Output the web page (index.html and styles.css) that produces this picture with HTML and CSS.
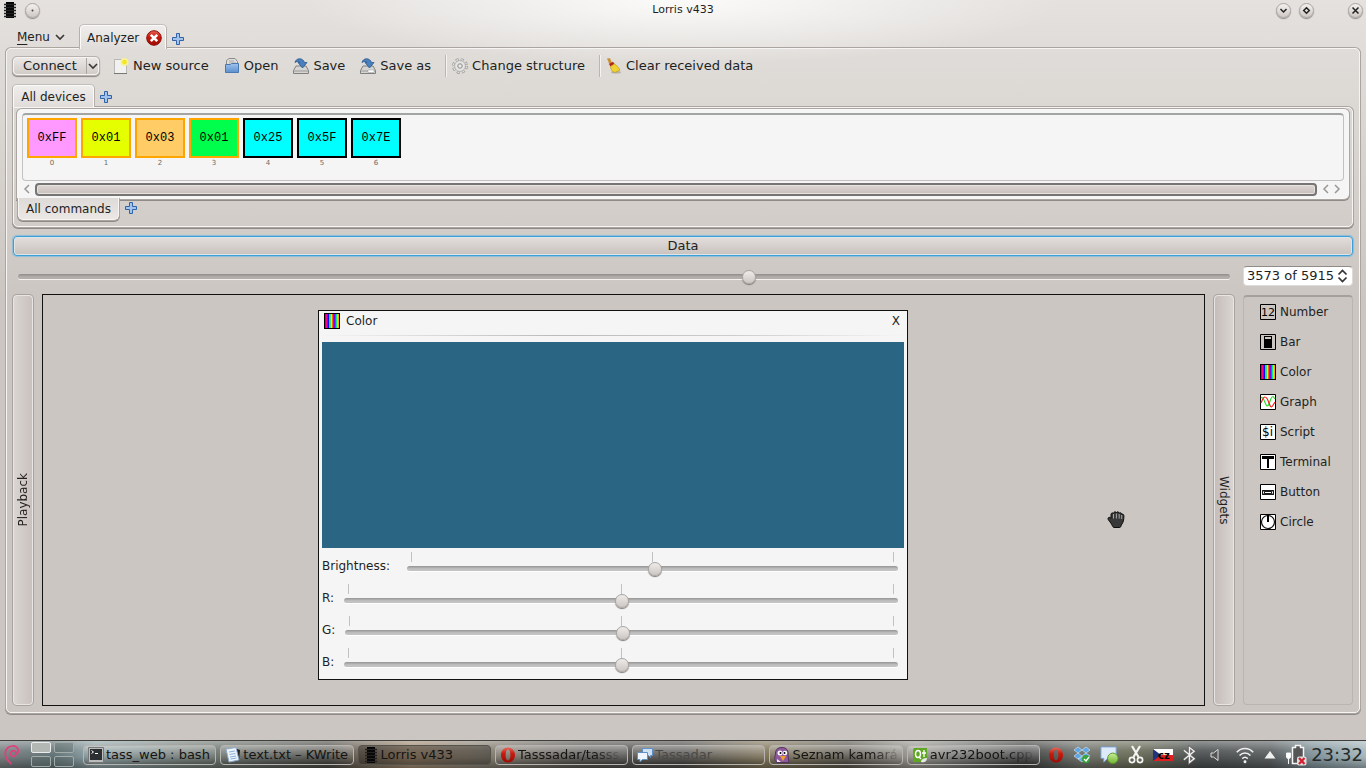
FILE: index.html
```html
<!DOCTYPE html>
<html lang="en">
<head>
<meta charset="utf-8">
<title>Lorris v433</title>
<link rel="stylesheet" href="styles.css">
</head>
<body>
<svg class="defs" aria-hidden="true">
  <defs>
    <linearGradient id="gRed" x1="0" y1="0" x2="0" y2="1"><stop offset="0" stop-color="#e8675a"/><stop offset=".4" stop-color="#c81c10"/><stop offset="1" stop-color="#9c0a04"/></linearGradient>
    <linearGradient id="gBlue" x1="0" y1="0" x2="0" y2="1"><stop offset="0" stop-color="#9fc3ec"/><stop offset="1" stop-color="#5b8fce"/></linearGradient>
    <linearGradient id="gGreen" x1="0" y1="0" x2="0" y2="1"><stop offset="0" stop-color="#c9ee9b"/><stop offset="1" stop-color="#6fb52c"/></linearGradient>
  </defs>
  <symbol id="plus" viewBox="0 0 12 12"><path d="M4.5.5h3v4h4v3h-4v4h-3v-4h-4v-3h4z" fill="#a3c4ea" stroke="#2f62a8"/></symbol>
  <symbol id="chip" viewBox="0 0 14 16"><path d="M3 0h8v16H3z"/><path d="M1 2.500h12M1 5.500h12M1 8.500h12M1 11.500h12M1 14.500h12" stroke="#222" stroke-width="1.500"/></symbol>
  <symbol id="chev" viewBox="0 0 10 8"><path d="M1 2l4 4 4-4" fill="none" stroke="#3a3836" stroke-width="1.600"/></symbol>
  <symbol id="colorbars" viewBox="0 0 16 16"><path d="M0 0h16v16H0z"/><path d="M1 1h1v14H1z" fill="#f00"/><path d="M2 1h1v14H2z" fill="#f08"/><path d="M3 1h1v14H3z" fill="#70f"/><path d="M4 1h1v14H4z" fill="#00f"/><path d="M5 1h1v14H5z" fill="#0df"/><path d="M6 1h1v14H6z" fill="#3e6"/><path d="M7 1h1v14H7z" fill="#df0"/><path d="M8 1h1v14H8z" fill="#f60"/><path d="M9 1h1v14H9z" fill="#f04"/><path d="M10 1h1v14h-1z" fill="#70f"/><path d="M11 1h1v14h-1z" fill="#07f"/><path d="M12 1h1v14h-1z" fill="#0e8"/><path d="M13 1h1v14h-1z" fill="#af0"/><path d="M14 1h1v14h-1z" fill="#fa0"/></symbol>
  <symbol id="drive" viewBox="0 0 16 16"><path d="M3 8h10l2.500 4.500v3H.5v-3z" fill="#d5d5d3" stroke="#80807e"/><path d="M1 13h14" stroke="#999"/><path d="M2 4.500C3-.5 10-.5 11.500 4.500H14L9.500 10 5 4.500h2C6.500 3 4 3 2 4.500z" fill="#4a80bd" stroke="#28578f" stroke-width=".8"/></symbol>
  <symbol id="opera" viewBox="0 0 16 16"><path fill-rule="evenodd" d="M8 0.500c4.200 0 7 3.200 7 7.500s-2.800 7.500-7 7.500S1 12.300 1 8 3.800.5 8 .5zM8 2.500C6.500 2.500 5.600 5 5.600 8s.9 5.500 2.400 5.500 2.400-2.500 2.400-5.500S9.500 2.500 8 2.500z" fill="url(#gRed)"/></symbol>
</svg>

<header class="titlebar">
  <div class="title-side">
    <svg width="14" height="16"><use href="#chip"/></svg>
    <button class="round" aria-label="Pin"><svg width="9" height="9" viewBox="0 0 9 9"><circle cx="4.500" cy="4.500" r="1" fill="#444"/></svg></button>
  </div>
  <h1>Lorris v433</h1>
  <div class="title-side title-end">
    <button class="round" aria-label="Minimize"><svg width="9" height="9" viewBox="0 0 9 9"><path d="M1.500 3l3 3 3-3" fill="none" stroke="#222" stroke-width="1.500"/></svg></button>
    <button class="round" aria-label="Maximize"><svg width="9" height="9" viewBox="0 0 9 9"><path d="M4.500 1.700l2.800 2.800-2.800 2.800-2.800-2.800z" fill="none" stroke="#222" stroke-width="1.500"/></svg></button>
    <button class="round close-window" aria-label="Close"><svg width="9" height="9" viewBox="0 0 9 9"><path d="M1.500 1.500l6 6M7.500 1.500l-6 6" stroke="#222" stroke-width="1.500"/></svg></button>
  </div>
</header>

<nav class="main-tabs">
  <button class="menu"><span><u>M</u>enu</span><svg width="10" height="8"><use href="#chev"/></svg></button>
  <div class="tab tab-main">
    <button class="plain">Analyzer</button>
    <button class="plain" aria-label="Close tab"><svg width="16" height="16" viewBox="0 0 16 16"><circle cx="8" cy="8" r="7.300" fill="url(#gRed)" stroke="#8e1008"/><path d="M4.800 4.800l6.400 6.400M11.200 4.800l-6.400 6.400" stroke="#fff" stroke-width="2.600"/></svg></button>
  </div>
  <button class="plain add" aria-label="New tab"><svg width="12" height="12"><use href="#plus"/></svg></button>
</nav>

<main class="frame">
  <div class="toolbar">
    <div class="split"><button class="plain connect">Connect</button><button class="plain drop" aria-label="Connect options"><svg width="10" height="8"><use href="#chev"/></svg></button></div>
    <button class="plain tool new"><svg width="16" height="16" viewBox="0 0 16 16"><path d="M1.500 1.500h12v14h-12z" fill="#f1f1ef" stroke="#b9b7b4"/><path d="M1 15.500h13" stroke="#777"/><circle cx="11.500" cy="4" r="4" fill="#f7f29a"/><circle cx="11.500" cy="4" r="2.300" fill="#f5e71b"/></svg>New source</button>
    <button class="plain tool"><svg width="16" height="16" viewBox="0 0 16 16"><path d="M2.500 8V2.500L5 .5h6l2.500 3V8z" fill="#dededc" stroke="#8a8a88"/><path d="M5 3h5M5 5h7" stroke="#aaa"/><path d="M1.500 6.500h5l1-1h7v9h-13z" fill="url(#gBlue)" stroke="#4a78b0"/></svg>Open</button>
    <button class="plain tool"><svg width="16" height="16"><use href="#drive"/></svg>Save</button>
    <button class="plain tool"><svg width="16" height="16" viewBox="0 0 16 16"><use href="#drive"/><path d="M8 12h6v2.500H8z" fill="#fff" stroke="#999" stroke-width=".5"/></svg>Save as</button>
    <span class="sep"></span>
    <button class="plain tool"><svg width="16" height="16" viewBox="0 0 16 16"><circle cx="8" cy="8" r="6.500" fill="none" stroke="#9b9997" stroke-width="2.800" stroke-dasharray="2.900 2.205"/><circle cx="8" cy="8" r="6.500" fill="none" stroke="#e6e5e3" stroke-width="1.400" stroke-dasharray="1.900 3.205" stroke-dashoffset="-.5"/><circle cx="8" cy="8" r="5.400" fill="#e6e5e3" stroke="#a9a7a5" stroke-width=".7"/><circle cx="8" cy="8" r="2.300" fill="#d2d1cf" stroke="#999"/><circle cx="8" cy="8" r="1" fill="#f4f4f4"/></svg>Change structure</button>
    <span class="sep"></span>
    <button class="plain tool"><svg width="16" height="16" viewBox="0 0 16 16"><ellipse cx="10" cy="14.300" rx="5" ry="1.300" fill="#8a8683" opacity=".5"/><path d="M1 .5l3-.2L6 5 3.500 6.500z" fill="#c79134"/><path d="M3 6l4-2.300L8.500 6 4.500 8.500z" fill="#b3261c"/><path d="M4.500 8.500L8.500 6c2.500 1.500 4 3.500 5.500 6l-5 2.500c-3-.5-4-3-4.500-6z" fill="#f0d232" stroke="#c29a12" stroke-width=".7"/></svg>Clear received data</button>
  </div>

  <section class="devices">
    <nav class="device-tabs">
      <button class="tab tab-device">All devices</button>
      <button class="plain add" aria-label="Add device"><svg width="12" height="12"><use href="#plus"/></svg></button>
    </nav>
    <div class="device-frame">
      <div class="packet-frame">
        <div class="packet">
          <div class="byte"><b class="pink">0xFF</b><small>0</small></div>
          <div class="byte"><b class="yellow">0x01</b><small>1</small></div>
          <div class="byte"><b class="orange">0x03</b><small>2</small></div>
          <div class="byte"><b class="green">0x01</b><small>3</small></div>
          <div class="byte"><b class="cyan">0x25</b><small>4</small></div>
          <div class="byte"><b class="cyan">0x5F</b><small>5</small></div>
          <div class="byte"><b class="cyan">0x7E</b><small>6</small></div>
        </div>
        <div class="scroll">
          <button class="plain" aria-label="Scroll left"><svg width="7" height="10" viewBox="0 0 7 10"><path d="M6 1L2 5l4 4" fill="none" stroke="#9a9896" stroke-width="1.500"/></svg></button>
          <div class="scroll-thumb"></div>
          <button class="plain" aria-label="Scroll left"><svg width="7" height="10" viewBox="0 0 7 10"><path d="M6 1L2 5l4 4" fill="none" stroke="#9a9896" stroke-width="1.500"/></svg></button>
          <button class="plain" aria-label="Scroll right"><svg width="7" height="10" viewBox="0 0 7 10"><path d="M1 1l4 4-4 4" fill="none" stroke="#9a9896" stroke-width="1.500"/></svg></button>
        </div>
      </div>
      <nav class="command-tabs">
        <button class="tab-bottom">All commands</button>
        <button class="plain add" aria-label="Add command"><svg width="12" height="12"><use href="#plus"/></svg></button>
      </nav>
    </div>
  </section>

  <button class="data">Data</button>

  <div class="position">
    <input class="range" type="range" min="0" max="5915" value="3573" aria-label="Packet position">
    <div class="spin">
      <input type="text" value="3573 of 5915" aria-label="Packet number">
      <button class="plain" aria-label="Step"><svg width="11" height="14" viewBox="0 0 11 14"><path d="M1.500 5.500l4-4 4 4M1.500 8.500l4 4 4-4" fill="none" stroke="#333" stroke-width="1.700"/></svg></button>
    </div>
  </div>

  <div class="workspace">
    <button class="side side-left"><span>Playback</span></button>
    <section class="canvas">
      <article class="widget">
        <header><svg width="16" height="16"><use href="#colorbars"/></svg><h2>Color</h2><button class="plain" aria-label="Close widget">X</button></header>
        <div class="swatch"></div>
        <div class="row"><label for="br">Brightness:</label><div class="scale scale-brightness"><div class="ticks"><i></i><i></i><i></i></div><input class="range" id="br" type="range" min="0" max="255" value="129"></div></div>
        <div class="row"><label for="r">R:</label><div class="scale"><div class="ticks"><i></i><i></i><i></i></div><input class="range" id="r" type="range" min="0" max="255" value="128"></div></div>
        <div class="row"><label for="g">G:</label><div class="scale"><div class="ticks"><i></i><i></i><i></i></div><input class="range" id="g" type="range" min="0" max="255" value="128"></div></div>
        <div class="row"><label for="b">B:</label><div class="scale"><div class="ticks"><i></i><i></i><i></i></div><input class="range" id="b" type="range" min="0" max="255" value="128"></div></div>
      </article>
      <svg class="hand" width="18" height="19" viewBox="0 0 18 19"><path d="M4.500 14L1.200 9.500C.5 8 1.800 6.800 3.200 7.600l.8.700V4.500C4 2.700 6 2.500 6.500 3.500 6.700 1.500 9 1.300 9.400 2.800c.5-1.500 2.600-1.200 2.800.5.600-1 2.400-.7 2.500 1 1-.6 2.200.1 2.200 1.500 0 4-.5 6.700-2.600 9.200-.5 1.500-.8 2.500-1.500 2.500H7c-1 0-1.500-1.500-2.500-3.500z" fill="#383838" stroke="#0c0c0c"/><path d="M6.500 4v4.500M9.400 3.500v5M12.200 4v4.500M14.700 5v4" stroke="#c4c4c4" stroke-width=".8"/></svg>
    </section>
    <button class="side side-right"><span>Widgets</span></button>
    <ul class="palette">
      <li><svg width="16" height="16" viewBox="0 0 16 16"><path d="M.5.5h15v15H.5z" fill="none" stroke="#000"/><text x="1" y="12" class="icon-num">12</text></svg>Number</li>
      <li><svg width="16" height="16" viewBox="0 0 16 16"><path d="M.5.5h15v15H.5z" fill="none" stroke="#000"/><path d="M4 2h8v12H4z"/><path d="M5 3h6v2H5z" fill="#ccc6c2"/></svg>Bar</li>
      <li><svg width="16" height="16"><use href="#colorbars"/></svg>Color</li>
      <li><svg width="16" height="16" viewBox="0 0 16 16"><path d="M.5.5h15v15H.5z" fill="#fff" stroke="#000"/><path d="M1 3.500C3 3 4 6 5 8.500S7.500 14 9 10s2-7.500 4-7.500L15 5" fill="none" stroke="#2ce02c" stroke-width="1.200"/><path d="M1 9c1.500-3 2-6 4-6s3 3 4 6 2 5 3.500 3L15 8" fill="none" stroke="#f02020" stroke-width="1.200"/></svg>Graph</li>
      <li><svg width="16" height="16" viewBox="0 0 16 16"><path d="M.5.5h15v15H.5z" fill="#fff" stroke="#000"/><text x="2" y="12" class="icon-script">$i</text></svg>Script</li>
      <li><svg width="16" height="16" viewBox="0 0 16 16"><path d="M.5.5h15v15H.5z" fill="#fff" stroke="#000"/><path d="M2 2h12v3H9v9H7V5H2z"/></svg>Terminal</li>
      <li><svg width="16" height="16" viewBox="0 0 16 16"><path d="M.5.5h15v15H.5z" fill="#fff" stroke="#000"/><path d="M2.500 6.500h11v4h-11zM4.500 7.500h7v2h-7zM2.500 6.500l2 1M13.500 6.500l-2 1M2.500 10.500l2-1M13.500 10.500l-2-1" fill="none" stroke="#000" stroke-width=".9"/></svg>Button</li>
      <li><svg width="16" height="16" viewBox="0 0 16 16"><path d="M.5.5h15v15H.5z" fill="#fff" stroke="#000"/><circle cx="8" cy="8" r="6.500" fill="none" stroke="#111" stroke-width="1.200"/><path d="M7 1h2v7H7z"/></svg>Circle</li>
    </ul>
  </div>
</main>

<footer class="taskbar">
  <button class="plain debian" aria-label="Start"><svg width="18" height="21" viewBox="0 0 18 21"><path d="M12 11.500c-3 2.500-6-1-3.500-4 2.500-2 5 0 4.500 3M13.500 11c4-5 .5-9.500-4.500-9C4 2.500 1.500 7 2.500 11.500c.8 4 3.500 6.500 6 8.500" fill="none" stroke="#e0407c" stroke-width="1.700"/></svg></button>
  <div class="pager"><i class="on"></i><i></i><i></i><i></i></div>
  <div class="tasks">
    <button class="task"><svg width="16" height="16" viewBox="0 0 16 16"><path d="M.5.5h15v15H.5z" fill="#bbb" stroke="#777"/><path d="M2 2h12v11H2z" fill="#2c2f31"/><path d="M3.500 3.500l2 1.500-2 1.500M7 6.500h3" fill="none" stroke="#fff"/></svg><span>tass_web : bash</span></button>
    <button class="task"><svg width="16" height="16" viewBox="0 0 16 16"><path d="M12 2l3 1-1 11-3-1z" fill="#222"/><path d="M1 2l10-1.500L14 13l-10 2z" fill="#eef4fb" stroke="#8fa9c6"/><path d="M4 5l6-1M4.500 7.500l6-1M5 10l6-1M5.500 12l6-1" stroke="#89aed8"/></svg><span>text.txt – KWrite</span></button>
    <button class="task active"><svg width="16" height="16"><use href="#chip"/></svg><span>Lorris v433</span></button>
    <button class="task"><svg width="16" height="16"><use href="#opera"/></svg><span class="fade">Tasssadar/tasss</span></button>
    <button class="task"><svg width="16" height="16" viewBox="0 0 16 16"><path d="M5.500 1.500h10v7h-2v2l-2-2h-6z" fill="#cfe0f3" stroke="#5f90c6"/><path d="M.5 5.500h10v7h-5l-2.500 2.500v-2.500H.5z" fill="#eef5fd" stroke="#5f90c6"/></svg><span class="dim">Tassadar</span></button>
    <button class="task"><svg width="16" height="16" viewBox="0 0 16 16"><path d="M8 .5c4.500 0 6.500 3 6 7l1 8H3c-3-2-2.500-6-1.500-8C1 3 3.500.5 8 .5z" fill="#8d5a9c" stroke="#51305e"/><circle cx="6" cy="6" r="2.500" fill="#fff"/><circle cx="11" cy="6" r="2.300" fill="#fff"/><circle cx="6.500" cy="6" r="1"/><circle cx="10.500" cy="6" r="1"/><path d="M6 9h6l-3 5z" fill="#f2a12c"/><path d="M3 12l4 3H3z" fill="#eee"/></svg><span class="fade">Seznam kamará</span></button>
    <button class="task"><svg width="16" height="16" viewBox="0 0 16 16"><path d="M2 1h13v11l-3 3H1V3z" fill="#5fa625"/><ellipse cx="6" cy="7" rx="2.500" ry="3.500" fill="none" stroke="#fff" stroke-width="1.400"/><path d="M7 10l2 2M10 6h4M12 3v7" stroke="#fff" stroke-width="1.300"/><path d="M9 15c0-3 3-4 6-4 0 3-2 5-6 4z" fill="#e8e8e8"/></svg><span class="fade">avr232boot.cpp</span></button>
  </div>
  <div class="tray">
    <svg width="16" height="18" viewBox="0 0 16 16"><use href="#opera"/></svg>
    <svg width="18" height="18" viewBox="0 0 18 18"><path d="M5 1l4 3-4 3-4-3zM13 1l4 3-4 3-4-3zM5 7l4 3-4 3-4-3zM13 7l4 3-4 3-4-3zM5 13l4-2 4 2-4 3z" fill="#5ea6e4" stroke="#d9ecfb" stroke-width=".6"/><circle cx="13" cy="13" r="4" fill="#37a33a"/><path d="M11 13l2 2 3-4" fill="none" stroke="#fff" stroke-width="1.300"/></svg>
    <svg width="19" height="20" viewBox="0 0 20 20"><path d="M1 1.500h16v12H8l-4 4v-4H1z" fill="#dceafa" stroke="#7ba2cf"/><circle cx="13.500" cy="13.500" r="5.500" fill="url(#gGreen)" stroke="#5b9a27"/></svg>
    <svg width="16" height="19" viewBox="0 0 16 19"><path d="M4 1l6.500 11M12 1L5.500 12" stroke="#f4f4f4" stroke-width="2.200"/><circle cx="4" cy="15" r="2.600" fill="none" stroke="#f4f4f4" stroke-width="1.700"/><circle cx="12" cy="15" r="2.600" fill="none" stroke="#f4f4f4" stroke-width="1.700"/></svg>
    <svg width="20" height="14" viewBox="0 0 20 14"><path d="M0 1h20v6H0z" fill="#fff"/><path d="M0 7h20v6H0z" fill="#e01f1f"/><path d="M0 1l8 6-8 6z" fill="#1f357f"/><text x="5" y="11" class="flag-text">cz</text></svg>
    <svg width="14" height="20" viewBox="0 0 15 20"><path d="M2 5l11 9-5 4V2l5 4-11 9" fill="none" stroke="#666" stroke-width="3"/><path d="M2 5l11 9-5 4V2l5 4-11 9" fill="none" stroke="#f2f2f2" stroke-width="1.400"/></svg>
    <svg class="speaker" width="12" height="14" viewBox="0 0 12 14"><path d="M2 5h2.500L9 1.500v11L4.500 9H2z" fill="#555" stroke="#ddd"/></svg>
    <svg width="20" height="20" viewBox="0 0 22 20"><path d="M2 7c5-5.500 13-5.500 18 0M5 10.500c3.500-3.500 8.500-3.500 12 0M8 14c2-2 4-2 6 0" fill="none" stroke="#f0f0f0" stroke-width="1.700"/><circle cx="11" cy="17.500" r="1.600" fill="#f4f4f4"/></svg>
    <svg width="12" height="8" viewBox="0 0 12 8"><path d="M6 0l5.500 7.500H.5z" fill="#f0f0f0"/></svg>
    <svg width="22" height="22" viewBox="0 0 22 22"><path d="M7.500 3.500h3V1.500h5v2h3v16h-11z" fill="#555" stroke="#f5f5f5" stroke-width="1.500"/><path d="M1.500 9v4c0 2 4 2 4 0V9zM3.500 14v6" fill="#fff" stroke="#f5f5f5"/><rect x="12" y="12.500" width="9.500" height="9" rx="2" fill="#dedede"/><path d="M14 14l5.500 6M19.500 14L14 20" stroke="#d51f2e" stroke-width="2.200"/></svg>
    <time class="clock">23:32</time>
  </div>
</footer>
</body>
</html>
```
FILE: styles.css
```css
* { box-sizing: border-box; }

body {
  margin: 0;
  min-height: 100vh;
  display: flex;
  flex-direction: column;
  font: 12px/16px "DejaVu Sans", sans-serif;
  color: #221f1e;
  background:
    radial-gradient(ellipse 380px 64px at 50% 0, #fbfbfa, #f3f2f100),
    linear-gradient(#e4e1de 0, #dcd8d4 100px, #cbc6c2 300px);
}

.defs { position: absolute; width: 0; height: 0; }
svg { display: block; flex: none; }
button, input { font: inherit; color: inherit; }
h1, h2, ul { margin: 0; padding: 0; font-weight: 400; }
.plain { border: 0; padding: 0; background: none; white-space: nowrap; }

/* Window title */
.titlebar { display: grid; grid-template-columns: 1fr auto 1fr; align-items: center; height: 20px; padding: 0 3px; }
.titlebar h1 { font-size: 11px; }
.title-side { display: flex; align-items: center; gap: 8px; }
.title-end { justify-content: flex-end; }
.round {
  display: grid;
  place-items: center;
  width: 15px;
  height: 15px;
  padding: 0;
  border: 1px solid #aaa5a1;
  border-radius: 50%;
  background: linear-gradient(#f3f1f0, #cfc8c4);
  box-shadow: 0 1px 1px #8f8a86;
}
.close-window { margin-left: 26px; }

/* Tabs */
.main-tabs { display: flex; align-items: flex-end; height: 29px; padding-left: 17px; position: relative; z-index: 1; }
.menu { display: flex; align-items: center; gap: 5px; width: 63px; height: 24px; border: 0; padding: 0; background: none; }
.menu u { text-underline-offset: 3px; }
.tab {
  border: 1px solid #fbfaf9;
  border-bottom: 0;
  border-radius: 4px 4px 0 0;
  background: linear-gradient(#efedeb, #e0dcd9);
  box-shadow: -1px 0 0 #b5b0ac, 1px 0 0 #b5b0ac, 0 -1px 0 #c2bebb;
}
.tab-main { display: flex; align-items: center; justify-content: space-between; width: 86px; height: 24px; padding: 0 3px 0 6px; }
.add { padding: 0 0 4px 6px; }

.frame {
  flex: 1;
  display: flex;
  flex-direction: column;
  margin: -1px 6px 27px;
  padding: 0 6px 7px;
  border: 1px solid #f7f5f4;
  border-radius: 5px;
  box-shadow: 0 0 0 1px #aaa5a1, 0 1px 0 1px #8f8a87;
}

/* Toolbar */
.toolbar { display: flex; align-items: center; height: 34px; font-size: 13px; }
.split {
  display: flex;
  width: 86px;
  height: 18px;
  border-radius: 4px;
  border: 1px solid #f6f4f3;
  background: linear-gradient(#eae7e5, #d2ccc8);
  box-shadow: 0 0 0 1px #b7b2ae, 0 1px 1px 1px #8b8683;
}
.connect { flex: 1; line-height: 14px; }
.drop { width: 12px; display: grid; place-items: center; border-left: 1px solid #aaa5a1; }
.tool { display: flex; align-items: center; gap: 4px; margin-left: 15px; }
.new { margin-left: 14px; }
.sep { width: 2px; height: 22px; margin: 0 0 0 14px; border-left: 1px solid #bbb6b2; background: #f5f3f2; }
.sep + .tool { margin-left: 5px; }

/* Device packets */
.device-tabs { display: flex; align-items: flex-end; height: 24px; }
.tab-device { width: 81px; height: 22px; padding: 0; }
.device-frame {
  padding: 2px 4px 6px;
  border: 1px solid #f7f5f4;
  border-radius: 0 5px 5px;
  box-shadow: 0 0 0 1px #aaa5a1, 0 1px 0 1px #8f8a87;
}
.device-tabs .tab { position: relative; z-index: 1; }
.packet-frame {
  padding: 3px 4px 2px;
  border-radius: 4px 4px 4px 0;
  background: #f5f5f5;
  box-shadow: 0 0 0 1px #f8f8f8, 0 0 0 2px #aaa5a1, 0 1px 0 2px #8f8a87;
}
.packet {
  display: flex;
  gap: 4px;
  height: 68px;
  padding: 3px 4px;
  border: 1px solid #c3c1bf;
  border-top: 2px solid #a3a5a5;
  border-radius: 4px;
}
.byte { width: 50px; display: flex; flex-direction: column; text-align: center; }
.byte b {
  height: 40px;
  border: 2px solid #ffa500;
  font: 12px/36px "Liberation Mono", monospace;
  color: #000;
}
.byte small { font-size: 7px; line-height: 10px; color: #6c6a68; }
.pink { background: #ff99ff; }
.yellow { background: #e5ff00; }
.orange { background: #ffcc66; }
.green { background: #00ff4c; }
.byte .cyan { background: #00ffff; border-color: #000; }
.scroll { display: flex; align-items: center; gap: 5px; height: 15px; padding: 1px 3px 0 1px; }
.scroll-thumb {
  flex: 1;
  height: 13px;
  border: 2px solid #777574;
  border-radius: 4px;
  background: linear-gradient(#dcd6d3, #c9c0bc);
  box-shadow: inset 0 0 0 1px #e7e3e1;
}
.command-tabs { display: flex; align-items: center; }
.tab-bottom {
  position: relative;
  z-index: 1;
  width: 101px;
  height: 22px;
  padding: 0;
  border: 1px solid #f8f6f5;
  border-top: 0;
  border-radius: 0 0 5px 5px;
  background: linear-gradient(#dedad7, #eae7e5);
  box-shadow: 0 0 0 1px #aaa5a1, 0 1px 0 1px #8f8a87;
  clip-path: inset(0 -2px -2px);
}
.command-tabs .add { padding: 0 0 2px 6px; }

.data {
  height: 20px;
  margin-top: 9px;
  padding: 0;
  border: 1px solid #3b9fd8;
  border-radius: 4px;
  background: linear-gradient(#e2dedc, #c9c2be);
  box-shadow: inset 0 0 0 1px #dfe4e6, 0 0 1px 1px #8cbdd8;
  font-size: 13px;
}

/* Sliders */
.range {
  appearance: none;
  display: block;
  width: 100%;
  height: 13px;
  margin: 0;
  background: none;
}
.range::-webkit-slider-runnable-track {
  height: 5px;
  border-radius: 3px;
  background: linear-gradient(#8f8c8a, #b3aeaa 60%, #b3aeaa);
  box-shadow: 0 1px 0 #f4f2f1;
}
.scale .range::-webkit-slider-runnable-track { background: linear-gradient(#949494, #c2c2c2 60%, #c2c2c2); box-shadow: 0 1px 0 #fff; }
.range::-webkit-slider-thumb {
  appearance: none;
  width: 14px;
  height: 14px;
  margin-top: -4px;
  border: 1px solid #aaa5a1;
  border-radius: 50%;
  background: linear-gradient(#edebe9, #cec7c3);
  box-shadow: 0 1px 1px #7b7775;
}
.position { display: flex; align-items: center; gap: 13px; height: 39px; padding: 1px 0 0 5px; }
.position .range { flex: 1; min-width: 0; }
.spin {
  display: flex;
  align-items: center;
  width: 110px;
  height: 20px;
  padding-right: 4px;
  border: 1px solid #dedad7;
  border-top-color: #8f8b89;
  border-radius: 4px;
  background: #fff;
  font-size: 13px;
}
.spin input { flex: 1; min-width: 0; padding: 0 0 0 3px; border: 0; background: none; }

/* Workspace */
.workspace { flex: 1; display: flex; gap: 9px; }
.side {
  display: grid;
  place-items: center;
  width: 20px;
  padding: 0;
  border: 1px solid #e8e5e3;
  border-radius: 4px;
  background: linear-gradient(90deg, #dad5d2, #c9c1bd);
  box-shadow: 0 0 0 1px #a8a39f;
}
.side-right { background: linear-gradient(90deg, #c5bdb9, #dad5d2); }
.side span { writing-mode: vertical-rl; }
.side-left span { transform: rotate(180deg); }
.canvas { position: relative; flex: 1; min-height: 400px; margin: -1px 0; border: 1px solid #111; }
.hand { position: absolute; left: 1064px; top: 215px; }
.palette {
  display: flex;
  flex-direction: column;
  gap: 14px;
  width: 110px;
  padding: 7px 0 0 16px;
  list-style: none;
  border: 1px solid #bab5b1;
  border-top: 2px solid #a5a09c;
  border-radius: 4px;
}
.palette li { display: flex; align-items: center; gap: 4px; }
.icon-num { font-size: 11px; }
.icon-script { font-size: 12px; }

.widget {
  position: absolute;
  left: 275px;
  top: 15px;
  width: 590px;
  padding: 0 3px 3px;
  border: 1px solid #111;
  background: #f5f5f5;
}
.widget header {
  display: flex;
  align-items: center;
  gap: 6px;
  height: 25px;
  padding: 0 4px 4px 2px;
  margin-bottom: 6px;
  border-bottom: 1px solid;
  border-image: linear-gradient(90deg, #f5f5f5, #bbb 40%, #ccc 70%, #f5f5f5) 1;
}
.widget h2 { flex: 1; font-size: 12px; }
.swatch { height: 206px; background: #2a6584; }
.row { display: flex; gap: 10px; height: 32px; padding-right: 6px; }
.row label { padding-top: 10px; }
.scale { flex: 1; padding-top: 4px; }
.scale-brightness { padding-left: 7px; }
.ticks { display: flex; justify-content: space-between; height: 10px; padding: 0 4px; }
.ticks i { width: 1px; background: #c1c1c1; }

/* Taskbar */
.taskbar {
  display: flex;
  align-items: center;
  height: 28px;
  padding: 0 3px;
  border-top: 1px solid #3f3f3e;
  font-size: 13px;
  background:
    linear-gradient(#ffffff66, #ffffff1c 35%, #0000 60%, #00000055),
    linear-gradient(90deg, #777c7d 0, #5e7074 4%, #8fa2a6 7%, #727c76 14%, #4b4a45 24%, #a08970 30%, #888072 35%, #55534f 43%, #4d4b48 50%, #807458 56%, #59564c 62%, #9b9891 67%, #787a75 70%, #3f413f 75%, #6e706b 79%, #686b56 83%, #4b4f50 88%, #585c5d 93%, #7e9097 96%, #a5b6bb 100%);
}
.pager { display: grid; grid-template-columns: 20px 20px; gap: 3px; margin: 0 9px 0 10px; }
.pager i { height: 11px; border: 1px solid #a1aba7; border-radius: 2px; background: #5d686966; }
.pager .on { background: #b3b8b5; border-color: #e9eceb; }
.tasks { flex: 1; display: flex; gap: 4px; min-width: 0; }
.task {
  flex: 1;
  min-width: 0;
  display: flex;
  align-items: center;
  gap: 2px;
  height: 20px;
  padding: 0 2px 0 4px;
  border: 1px solid #b5b4b1;
  border-radius: 4px;
  background: linear-gradient(#ffffff4d, #00000026);
  color: #151413;
  white-space: nowrap;
}
.active { background: #0000004d; border-color: #55534e; }
.fade { mask-image: linear-gradient(90deg, #000 75%, #0002); }
.dim { color: #4a4946; }
.tray { display: flex; align-items: center; gap: 9px; margin-left: 8px; }
.speaker { margin: 0 5px 0 4px; }
.flag-text { font-size: 10px; font-weight: 700; }
.clock { font-size: 18px; color: #262a2b; margin-left: -5px; }
```
